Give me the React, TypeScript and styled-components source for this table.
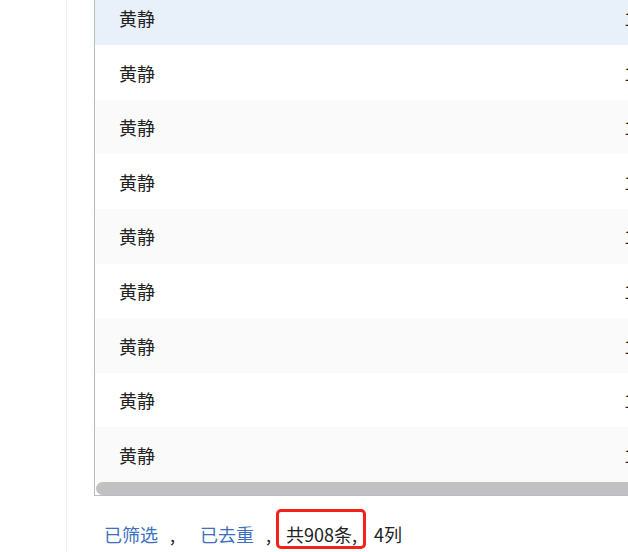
import styled, { createGlobalStyle } from "styled-components";

const GlobalStyle = createGlobalStyle`
  html, body {
    margin: 0;
    padding: 0;
    background: #fff;
  }
  body {
    font-family: "Noto Sans CJK SC", "Noto Sans", sans-serif;
    color: #222;
  }
`;

const Page = styled.div`
  display: flex;
  height: 552px;
  overflow: hidden;
`;

const Gutter = styled.div`
  width: 66px;
  flex-shrink: 0;
  border-right: 1px solid #eeeeee;
`;

const Main = styled.div`
  flex: 1;
  min-width: 0;
  padding-left: 27px;
  display: flex;
  flex-direction: column;
`;

const TableBox = styled.div`
  border-left: 1px solid #b9bcc2;
  border-bottom: 1px solid #b9bcc2;
  display: flex;
  flex-direction: column;
`;

const Body = styled.div`
  height: 482px;
  overflow: hidden;
  display: flex;
  flex-direction: column;
  justify-content: flex-end;
`;

const Row = styled.div<{ $tone: "hover" | "stripe" | "plain" }>`
  flex-shrink: 0;
  height: 54.6px;
  display: flex;
  align-items: center;
  white-space: nowrap;
  font-size: 18px;
  background: ${(p) =>
    p.$tone === "hover" ? "#e8f0fa" : p.$tone === "stripe" ? "#fafafa" : "#fff"};
`;

const NameCell = styled.div`
  box-sizing: border-box;
  width: 529px;
  flex-shrink: 0;
  padding-left: 24px;
`;

const PhoneCell = styled.div``;

const Scrollbar = styled.div`
  height: 13px;
  padding-left: 1px;
  display: flex;
`;

const Thumb = styled.div`
  flex: 1;
  background: #c1c1c1;
  border-radius: 7px 0 0 7px;
`;

const Footer = styled.div`
  display: flex;
  align-items: baseline;
  height: 40px;
  margin-top: 13px;
  padding-left: 10px;
  font-size: 18px;
  white-space: nowrap;
`;

const Link = styled.span`
  color: #3d6fbe;
`;

const Sep = styled.span<{ $after: number }>`
  margin-left: 12px;
  margin-right: ${(p) => p.$after}px;
`;

const Count = styled.span`
  box-sizing: border-box;
  height: 40px;
  display: flex;
  align-items: center;
  padding: 9px 6px 0 7px;
  border: 3px solid #f5211b;
  border-radius: 5px;
`;

const Cols = styled.span`
  margin-left: 8px;
`;

const rows = Array.from({ length: 9 }, (_, i) => i);

export default function App() {
  return (
    <>
      <GlobalStyle />
      <Page>
        <Gutter />
        <Main>
          <TableBox>
            <Body>
              {rows.map((i) => (
                <Row
                  key={i}
                  $tone={i === 0 ? "hover" : i % 2 === 0 ? "stripe" : "plain"}
                >
                  <NameCell>黄静</NameCell>
                  <PhoneCell>13800138000</PhoneCell>
                </Row>
              ))}
            </Body>
            <Scrollbar>
              <Thumb />
            </Scrollbar>
          </TableBox>
          <Footer>
            <Link>已筛选</Link>
            <Sep $after={25}>,</Sep>
            <Link>已去重</Link>
            <Sep $after={5}>,</Sep>
            <Count>共908条,</Count>
            <Cols>4列</Cols>
          </Footer>
        </Main>
      </Page>
    </>
  );
}
